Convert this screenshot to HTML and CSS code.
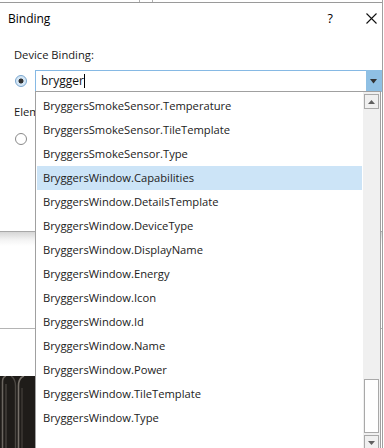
FILE: index.html
```html
<!DOCTYPE html>
<html lang="en">
<head>
  <meta charset="UTF-8" />
  <title>Binding</title>
  <link rel="stylesheet" href="styles.css">
</head>
<body>
  <div class="screen">
    <div class="topbar"><span class="tick t1"></span><span class="tick t2"></span></div>

    <div class="dialog">
      <div class="titlebar">
        <span class="title">Binding</span>
        <span class="help">?</span>
        <svg class="close" width="11" height="11" viewBox="0 0 11 11">
          <path d="M0.5 0.5 L10.5 10.5 M10.5 0.5 L0.5 10.5" stroke="#111" stroke-width="1.1" fill="none"/>
        </svg>
      </div>
      <div class="content">
        <div class="label">Device Binding:</div>
        <div class="row">
          <span class="radio on"></span>
          <div class="combo">
            <span class="combo-text">brygger<span class="caret"></span></span>
            <span class="combo-btn">
              <svg width="8" height="5" viewBox="0 0 8 5"><path d="M0 0 H7 L3.5 4.5 Z" fill="#333"/></svg>
            </span>
          </div>
        </div>
        <div class="label second">Element Binding:</div>
        <div class="row radio-row">
          <span class="radio"></span>
        </div>
      </div>
    </div>

    <div class="backdrop">
      <div class="pane upper"></div>
      <div class="pane lower"></div>
      <div class="photo">
        <svg width="35" height="72" viewBox="0 0 35 72">
          <rect width="35" height="72" fill="#1f1c19"/>
          <path d="M2.5 72 V6 Q2.5 1 6 0" stroke="#6b6660" stroke-width="1.5" fill="none"/>
          <path d="M6 72 V8" stroke="#3a3632" stroke-width="2" fill="none"/>
          <path d="M18.5 72 V10 Q18.5 2 24 0" stroke="#77716a" stroke-width="1.6" fill="none"/>
          <path d="M15.5 72 V10 Q15.5 3 11 0" stroke="#4c4843" stroke-width="1.4" fill="none"/>
          <path d="M22 72 V12" stroke="#35312d" stroke-width="2" fill="none"/>
        </svg>
      </div>
    </div>

    <div class="dropdown">
      <ul class="list">
        <li>BryggersSmokeSensor.Temperature</li>
        <li>BryggersSmokeSensor.TileTemplate</li>
        <li>BryggersSmokeSensor.Type</li>
        <li class="selected">BryggersWindow.Capabilities</li>
        <li>BryggersWindow.DetailsTemplate</li>
        <li>BryggersWindow.DeviceType</li>
        <li>BryggersWindow.DisplayName</li>
        <li>BryggersWindow.Energy</li>
        <li>BryggersWindow.Icon</li>
        <li>BryggersWindow.Id</li>
        <li>BryggersWindow.Name</li>
        <li>BryggersWindow.Power</li>
        <li>BryggersWindow.TileTemplate</li>
        <li>BryggersWindow.Type</li>
      </ul>
      <div class="scrollbar">
        <div class="sb-btn">
          <svg width="7" height="4" viewBox="0 0 7 4"><path d="M0 4 H7 L3.5 0 Z" fill="#606060"/></svg>
        </div>
        <div class="sb-track"><div class="sb-thumb"></div></div>
        <div class="sb-btn">
          <svg width="7" height="4" viewBox="0 0 7 4"><path d="M0 0 H7 L3.5 4 Z" fill="#606060"/></svg>
        </div>
      </div>
    </div>
  </div>
</body>
</html>
```

FILE: styles.css
```css
/* Base */
html, body {
  margin: 0;
  padding: 0;
  background: #fff;
}
body {
  font-family: 'Open Sans', 'Noto Sans', sans-serif;
  font-size: 11.2px;
  color: #1a1a1a;
  overflow: hidden;
}
.screen {
  position: relative;
  width: 382px;
  height: 448px;
  border-right: 1px solid #a0a0a0;
  overflow: hidden;
}

/* Window strip above the dialog */
.topbar {
  position: relative;
  height: 2px;
  border-bottom: 1px solid #9a9a9a;
}
.tick {
  position: absolute;
  top: 0;
  width: 1px;
  height: 2px;
  background: #b0b0b0;
}
.t1 { left: 139px; }
.t2 { left: 152px; }

/* Dialog */
.dialog {
  height: 228px;
  background: #fff;
  border-bottom: 1px solid #a8a8a8;
}
.titlebar {
  display: flex;
  align-items: center;
  height: 31px;
  padding: 0 3px 0 8px;
  font-size: 12px;
  color: #000;
}
.title {
  flex: 1;
}
.help {
  margin-right: 33px;
  font-size: 12.5px;
}
.close {
  margin-right: 2px;
}
.content {
  padding: 13px 0 0 14px;
}
.label {
  line-height: 16px;
  margin-bottom: 7px;
}
.label.second {
  margin-top: 12px;
  margin-bottom: 13px;
}
.row {
  display: flex;
  align-items: center;
  height: 22px;
}
.radio-row {
  height: 12px;
}
.radio {
  box-sizing: border-box;
  width: 12px;
  height: 12px;
  border-radius: 50%;
  border: 1px solid #8a8a8a;
  background: #fff;
  margin-left: 1px;
}
.radio.on {
  border-color: #7aa6cf;
  background: radial-gradient(circle, #333 0 2.2px, #d4e6f5 2.8px);
}

/* Combo box */
.combo {
  box-sizing: border-box;
  display: flex;
  height: 22px;
  margin-left: 8px;
  flex: 1;
  border: 1px solid #86b9e4;
  border-right: none;
}
.combo-text {
  flex: 1;
  padding-left: 5px;
  line-height: 19px;
  font-size: 12px;
  color: #111;
}
.caret {
  display: inline-block;
  width: 1px;
  height: 14px;
  background: #000;
  vertical-align: -3px;
}
.combo-btn {
  display: flex;
  align-items: center;
  justify-content: center;
  width: 16px;
  margin-top: -1px;
  margin-bottom: -1px;
  background: #8fc0e4;
}

/* Background behind the dialog */
.backdrop {
  height: 216px;
}
.pane.upper {
  height: 96px;
  border-bottom: 1px solid #b4b4b4;
  background: linear-gradient(#d6d6d6, #f4f4f4 8px, #fff 14px);
}
.pane.lower {
  height: 47px;
}
.photo {
  width: 35px;
  height: 72px;
}
.photo svg {
  display: block;
}

/* Dropdown list (overlays the dialog) */
.dropdown {
  position: absolute;
  left: 35px;
  top: 91px;
  width: 346px;
  height: 360px;
  box-sizing: border-box;
  display: flex;
  border: 1px solid #a0a0a0;
  background: #fff;
}
.list {
  flex: 1;
  margin: 0;
  padding: 2px 1px 0 1px;
  list-style: none;
}
.list li {
  height: 24px;
  line-height: 24px;
  padding-left: 6px;
  white-space: nowrap;
  color: #222;
}
.list li.selected {
  background: #cce4f7;
}

/* Scrollbar */
.scrollbar {
  width: 17px;
  display: flex;
  flex-direction: column;
  background: #f0f0f0;
}
.sb-btn {
  box-sizing: border-box;
  height: 15px;
  margin: 2px 1px 0 1px;
  border: 1px solid #a9a9a9;
  display: flex;
  align-items: center;
  justify-content: center;
}
.sb-track {
  flex: 1;
  padding-top: 270px;
}
.sb-thumb {
  box-sizing: border-box;
  height: 54px;
  margin: 0 1px;
  background: #fff;
  border: 1px solid #a9a9a9;
}
```
